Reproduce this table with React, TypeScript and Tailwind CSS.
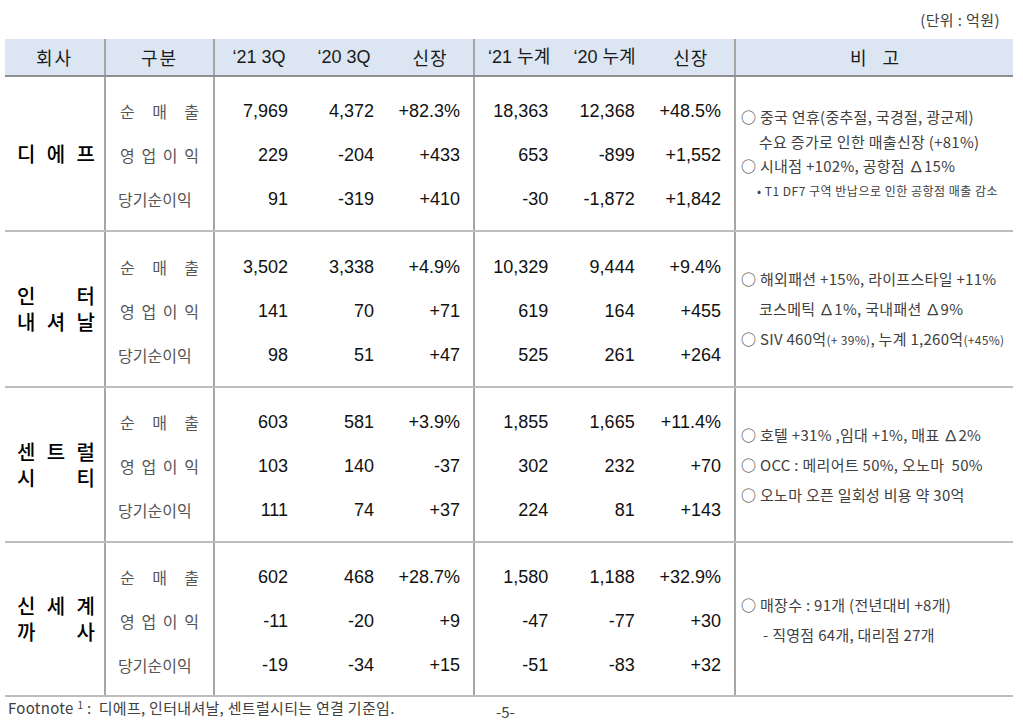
const kr = "font-['Noto_Sans_CJK_KR',sans-serif]";
const num = "font-['Liberation_Sans','Noto_Sans_CJK_KR',sans-serif]";

type Row = [string, string, string];

const sections = [
  {
    h: "h-[155px]",
    name: [["디", "에", "프"]],
    q: [
      ["7,969", "4,372", "+82.3%"],
      ["229", "-204", "+433"],
      ["91", "-319", "+410"],
    ] as Row[],
    acc: [
      ["18,363", "12,368", "+48.5%"],
      ["653", "-899", "+1,552"],
      ["-30", "-1,872", "+1,842"],
    ] as Row[],
  },
  {
    h: "h-[156px]",
    name: [
      ["인", "터"],
      ["내", "셔", "날"],
    ],
    q: [
      ["3,502", "3,338", "+4.9%"],
      ["141", "70", "+71"],
      ["98", "51", "+47"],
    ] as Row[],
    acc: [
      ["10,329", "9,444", "+9.4%"],
      ["619", "164", "+455"],
      ["525", "261", "+264"],
    ] as Row[],
  },
  {
    h: "h-[155px]",
    name: [
      ["센", "트", "럴"],
      ["시", "티"],
    ],
    q: [
      ["603", "581", "+3.9%"],
      ["103", "140", "-37"],
      ["111", "74", "+37"],
    ] as Row[],
    acc: [
      ["1,855", "1,665", "+11.4%"],
      ["302", "232", "+70"],
      ["224", "81", "+143"],
    ] as Row[],
  },
  {
    h: "h-[154px]",
    name: [
      ["신", "세", "계"],
      ["까", "사"],
    ],
    q: [
      ["602", "468", "+28.7%"],
      ["-11", "-20", "+9"],
      ["-19", "-34", "+15"],
    ] as Row[],
    acc: [
      ["1,580", "1,188", "+32.9%"],
      ["-47", "-77", "+30"],
      ["-51", "-83", "+32"],
    ] as Row[],
  },
];

const labels = [["순", "매", "출"], ["영", "업", "이", "익"], ["당기순이익"]];

function Numbers({ rows }: { rows: Row[] }) {
  return (
    <div className="flex flex-col justify-center">
      {rows.map((r, i) => (
        <div key={i} className="grid grid-cols-3 h-[44px] items-center">
          {r.map((v, j) => (
            <div key={j} className={`${num} text-[18px] text-[#111] text-right pr-[13px]`}>
              {v}
            </div>
          ))}
        </div>
      ))}
    </div>
  );
}

function Remarks({ index }: { index: number }) {
  const line = `${kr} text-[15px] tracking-[0.3px] text-[#404040] whitespace-nowrap`;
  if (index === 0)
    return (
      <div className="flex flex-col justify-center leading-[24.5px] pt-[1px]">
        <div className={line}>○ 중국 연휴(중추절, 국경절, 광군제)</div>
        <div className={`${line} pl-[18px]`}>수요 증가로 인한 매출신장 (+81%)</div>
        <div className={line}>○ 시내점 +102%, 공항점 ∆15%</div>
        <div className={`${kr} text-[12px] text-[#404040] pl-[16px] tracking-[0.5px] whitespace-nowrap`}>
          • T1 DF7 구역 반납으로 인한 공항점 매출 감소
        </div>
      </div>
    );
  if (index === 1)
    return (
      <div className="flex flex-col justify-center leading-[30px]">
        <div className={line}>○ 해외패션 +15%, 라이프스타일 +11%</div>
        <div className={`${line} pl-[18px]`}>코스메틱 ∆1%, 국내패션 ∆9%</div>
        <div className={line}>
          ○ SIV 460억<span className="text-[12px] tracking-[0.3px]">(+ 39%)</span>, 누계 1,260억
          <span className="text-[12px] tracking-[0.3px]">(+45%)</span>
        </div>
      </div>
    );
  if (index === 2)
    return (
      <div className="flex flex-col justify-center leading-[30px]">
        <div className={line}>○ 호텔 +31% ,임대 +1%, 매표 ∆2%</div>
        <div className={line}>○ OCC : 메리어트 50%, 오노마&nbsp; 50%</div>
        <div className={line}>○ 오노마 오픈 일회성 비용 약 30억</div>
      </div>
    );
  return (
    <div className="flex flex-col justify-center leading-[30px] pt-[1px]">
      <div className={line}>○ 매장수 : 91개 (전년대비 +8개)</div>
      <div className={`${line} pl-[22px]`}>- 직영점 64개, 대리점 27개</div>
    </div>
  );
}

export default function App() {
  return (
    <div className="w-[1023px] h-[723px] bg-white overflow-hidden">
      <div className={`${kr} h-[39px] flex justify-end items-center pr-[23px] pt-[1px] text-[15px] tracking-[0.4px] text-[#404040]`}>
        (단위 : 억원)
      </div>

      <div className="ml-[5px] w-[1008px]">
        {/* header */}
        <div className="grid grid-cols-[101px_109px_260px_261px_277px] h-[38px] bg-[#dce6f2] border-b-2 border-[#8f8f8f] text-[18px] text-[#1a1a1a]">
          <div className={`${kr} border-r-2 border-[#a6a6a6] flex items-center justify-center tracking-[2px]`}>회사</div>
          <div className={`${kr} border-r-2 border-[#a6a6a6] flex items-center justify-center tracking-[2px]`}>구분</div>
          <div className={`${num} border-r-2 border-[#a6a6a6] grid grid-cols-3 items-center text-center`}>
            <div className="pl-[2px]">‘21 3Q</div>
            <div>‘20 3Q</div>
            <div className={`${kr} tracking-[1px]`}>신장</div>
          </div>
          <div className={`${num} border-r-2 border-[#a6a6a6] grid grid-cols-3 items-center text-center`}>
            <div className="pl-[2px]">‘21 누계</div>
            <div>‘20 누계</div>
            <div className={`${kr} tracking-[1px]`}>신장</div>
          </div>
          <div className={`${kr} flex items-center justify-center`}>비&nbsp;&nbsp;&nbsp;&nbsp;고</div>
        </div>

        {sections.map((s, si) => (
          <div
            key={si}
            className={`grid grid-cols-[101px_109px_260px_261px_277px] border-b-2 border-[#bdbdbd] ${s.h}`}
          >
            <div className="border-r-2 border-[#a6a6a6] flex flex-col justify-center pl-[12px] pr-[9px]">
              {s.name.map((line, li) => (
                <div key={li} className={`${kr} flex justify-between text-[20px] font-medium text-black leading-[26px]`}>
                  {line.map((c, ci) => (
                    <span key={ci}>{c}</span>
                  ))}
                </div>
              ))}
            </div>
            <div className="border-r-2 border-[#a6a6a6] flex flex-col justify-center pt-[3px]">
              {labels.map((l, li) => (
                <div
                  key={li}
                  className={`${kr} h-[44px] flex items-center justify-between text-[16px] text-[#555] ${
                    l.length === 1 ? "pl-[12px] pr-[11px]" : "pl-[14px] pr-[14px]"
                  }`}
                >
                  {l.map((c, ci) => (
                    <span key={ci}>{c}</span>
                  ))}
                </div>
              ))}
            </div>
            <div className="border-r-2 border-[#a6a6a6] flex flex-col justify-center pt-[4px]">
              <Numbers rows={s.q} />
            </div>
            <div className="border-r-2 border-[#a6a6a6] flex flex-col justify-center pt-[4px]">
              <Numbers rows={s.acc} />
            </div>
            <div className="flex flex-col justify-center pl-[5px]">
              <Remarks index={si} />
            </div>
          </div>
        ))}
      </div>

      <div className="flex items-start h-[24px] pl-[8px] pt-[1px]">
        <div className={`${kr} text-[15px] leading-[20px] tracking-[0.3px] text-[#404040] w-[488px] whitespace-nowrap`}>
          Footnote <sup className="text-[10px]">1</sup> :&nbsp; 디에프, 인터내셔날, 센트럴시티는 연결 기준임.
        </div>
        <div className={`${kr} text-[15px] leading-[20px] text-[#404040] pt-[4px]`}>-5-</div>
      </div>
    </div>
  );
}
